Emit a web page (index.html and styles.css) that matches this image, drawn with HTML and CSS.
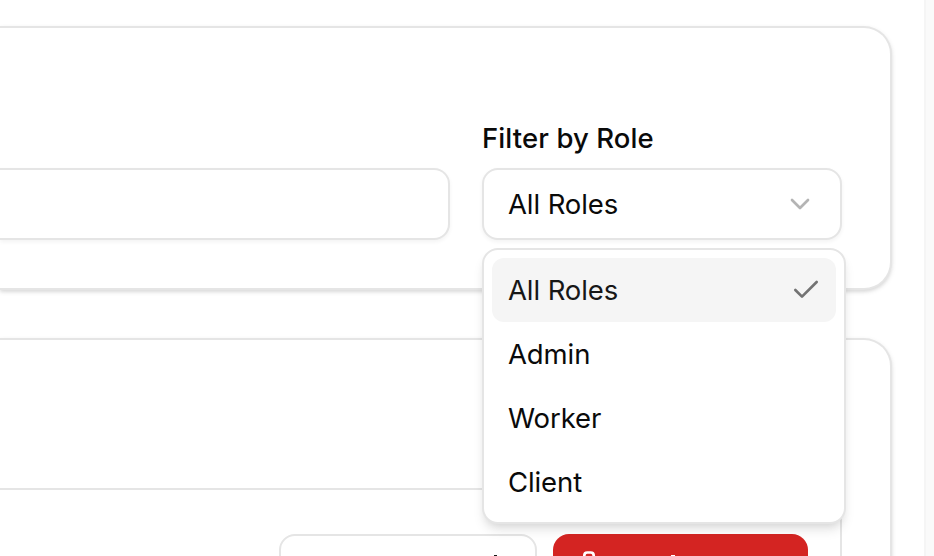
FILE: index.html
```html
<!DOCTYPE html>
<html lang="en">
<head>
<meta charset="utf-8">
<title>Users</title>
<link rel="stylesheet" href="styles.css">
</head>
<body>
<main class="page">
  <section class="card filters">
    <div class="search"></div>
    <div class="field">
      <div class="label">Filter by Role</div>
      <div class="select">
        <span class="text">All Roles</span>
        <svg class="chevron" width="32" height="32" viewBox="0 0 24 24"><path d="m6 9 6 6 6-6"/></svg>
        <div class="menu">
          <div class="option selected"><span class="text">All Roles</span>
            <svg class="check" width="32" height="32" viewBox="0 0 24 24"><path d="M20 6 9 17l-5-5"/></svg>
          </div>
          <div class="option"><span class="text">Admin</span></div>
          <div class="option"><span class="text">Worker</span></div>
          <div class="option"><span class="text">Client</span></div>
        </div>
      </div>
    </div>
  </section>
  <section class="card users">
    <div class="row">
      <div class="button"><i class="tick"></i></div>
      <div class="button danger">
        <svg width="32" height="32" viewBox="0 0 32 32"><path d="M11.3 14V7.5q0-3 3-3h3.4q3 0 3 3V14"/></svg>
        <i class="tick"></i>
      </div>
    </div>
  </section>
</main>
</body>
</html>
```
FILE: styles.css
```css
* { box-sizing: border-box; }
body {
  margin: 0;
  height: 556px;
  overflow: hidden;
  background: #fafafa;
  color: #0a0a0a;
  font: 400 27.5px/40px Inter, "Liberation Sans", sans-serif;
  letter-spacing: -.1px;
}
.page {
  width: 926px;
  height: 556px;
  padding: 26px 32px 0 0;
  overflow: hidden;
  background: #fff;
  border-right: 2px solid #f5f5f5;
}
.card {
  border: 2px solid #e5e5e5;
  border-left: 0;
  border-radius: 0 28px 28px 0;
  background: #fff;
  box-shadow: 0 2px 5px rgba(0, 0, 0, .1), 0 2px 3px rgba(0, 0, 0, .06);
}
.filters {
  display: flex;
  align-items: flex-end;
  gap: 32px;
  height: 264px;
  padding: 0 48px 48px 0;
}
.search, .select {
  height: 72px;
  border: 2px solid #e5e5e5;
  border-radius: 16px;
  background: #fff;
  box-shadow: 0 2px 4px rgba(0, 0, 0, .05);
}
.search {
  flex: 1;
  border-left: 0;
  border-radius: 0 16px 16px 0;
}
.field { width: 360px; }
.label { margin-bottom: 10px; font-weight: 500; letter-spacing: .1px; }
.select {
  position: relative;
  display: flex;
  align-items: center;
  justify-content: space-between;
  padding: 0 24px;
}
svg {
  fill: none;
  stroke: currentColor;
  stroke-width: 2;
  stroke-linecap: round;
  stroke-linejoin: round;
}
.chevron { color: #b4b4b4; }
.check { color: #737373; }
.menu {
  position: absolute;
  z-index: 1;
  top: 78px;
  left: -2px;
  width: 364px;
  height: 276px;
  padding: 8px;
  border: 2px solid #e5e5e5;
  border-radius: 16px;
  background: #fff;
  box-shadow: 0 8px 12px -2px rgba(0, 0, 0, .1), 0 4px 8px -4px rgba(0, 0, 0, .1);
}
.option {
  display: flex;
  align-items: center;
  justify-content: space-between;
  height: 64px;
  padding: 0 14px 0 16px;
  border-radius: 12px;
}
.selected { background: #f5f5f5; color: #171717; }
.users {
  height: 300px;
  margin-top: 48px;
  padding: 148px 48px 0 0;
}
.row {
  display: flex;
  justify-content: flex-end;
  gap: 16px;
  height: 150px;
  padding: 44px 32px 0 0;
  border-top: 2px solid #e5e5e5;
  border-right: 2px solid #e5e5e5;
}
.button {
  width: 258px;
  height: 64px;
  padding: 16px 24px;
  border: 2px solid #e5e5e5;
  border-radius: 16px;
}
.danger {
  display: flex;
  width: 255px;
  padding: 14px 20px;
  border: 0;
  background: #d42422;
  color: #fff;
}
.danger svg { stroke-width: 2.7; }
.tick {
  display: block;
  width: 3px;
  height: 10px;
  margin: 3px 0 0 189px;
  background: #171717;
}
.danger .tick { width: 4px; margin: 7px 0 0 66px; background: #fff; }
```
